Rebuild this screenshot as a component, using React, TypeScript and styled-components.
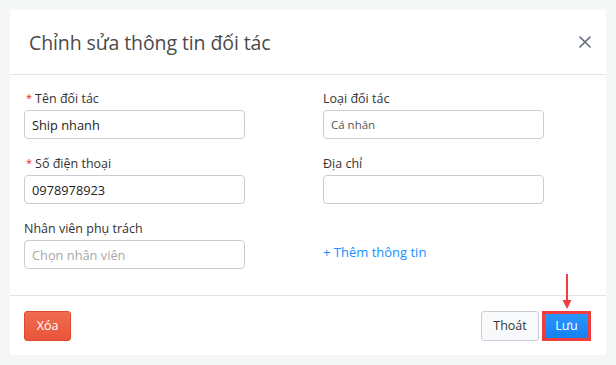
import React from "react";
import styled, { createGlobalStyle } from "styled-components";

const Global = createGlobalStyle`
  html, body { margin: 0; padding: 0; background: #f5f6f6; }
  body { font-family: "Open Sans", "Noto Sans", sans-serif; }
  * { box-sizing: border-box; }
`;

const Page = styled.div`
  width: 616px;
  height: 365px;
  padding: 10px;
  background: #f5f6f6;
`;

const Card = styled.div`
  width: 596px;
  height: 345px;
  background: #fff;
  display: flex;
  flex-direction: column;
`;

const Header = styled.div`
  height: 65px;
  border-bottom: 1px solid #e3e3e3;
  display: flex;
  align-items: center;
  justify-content: space-between;
  padding: 0 15px 0 19px;
`;

const Title = styled.h2`
  margin: 0;
  font-size: 19.5px;
  font-weight: 400;
  color: #4a4a4a;
  letter-spacing: -0.1px;
`;

const CloseBtn = styled.button`
  border: none;
  background: none;
  padding: 0;
  width: 12px;
  height: 12px;
  display: flex;
  cursor: pointer;
`;

const Body = styled.div`
  flex: 1;
  display: grid;
  grid-template-columns: 299px 1fr;
  grid-auto-rows: 65px;
  padding: 15px 14px 0 14px;
  border-bottom: 1px solid #e3e3e3;
`;

const Field = styled.div`
  display: flex;
  flex-direction: column;
  gap: 2px;
`;

const Label = styled.label`
  font-size: 12.5px;
  line-height: 18px;
  color: #333;
  display: flex;
  align-items: center;
`;

const Star = styled.span`
  color: #f5222d;
  font-size: 11px;
  margin: 0 3px 0 2px;
  position: relative;
  top: -1px;
`;

const Input = styled.input<{ $small?: boolean }>`
  width: 221px;
  height: 29px;
  border: 1px solid #c9ced6;
  border-radius: 4px;
  padding: 0 7px;
  font-family: inherit;
  font-size: ${(p) => (p.$small ? "11.5px" : "12.8px")};
  color: ${(p) => (p.$small ? "#555" : "#222")};
  outline: none;
  background: #fff;
  &::placeholder {
    color: #a8a8a8;
  }
`;

const AddLink = styled.a`
  margin-top: 3px;
  font-size: 13px;
  color: #1890ff;
  line-height: 18px;
  cursor: pointer;
`;

const Footer = styled.div`
  height: 59px;
  display: flex;
  align-items: center;
  justify-content: space-between;
  padding: 0 15px 0 14px;
`;

const Actions = styled.div`
  display: flex;
  align-items: center;
  gap: 3px;
`;

const Button = styled.button<{ $variant: "danger" | "default" | "primary" }>`
  height: 30px;
  font-family: inherit;
  font-size: 12.5px;
  border-radius: 3px;
  cursor: pointer;
  padding: 0;
  position: relative;
  ${(p) =>
    p.$variant === "danger"
      ? `
    width: 47px;
    color: #fff;
    border: 1px solid #e0482c;
    background: linear-gradient(#f06c50, #e8553a);
  `
      : p.$variant === "default"
      ? `
    width: 58px;
    color: #333;
    border: 1px solid #c9ced6;
    background: #f8f9fa;
  `
      : `
    width: 49px;
    color: #fff;
    border: 3px solid #f03e3e;
    border-radius: 0;
    background: linear-gradient(#2a96ff, #1681f2);
  `}
`;

const Arrow = styled.svg`
  position: absolute;
  left: 17px;
  top: -40px;
`;

export default function App() {
  return (
    <>
      <Global />
      <Page>
        <Card>
          <Header>
            <Title>Chỉnh sửa thông tin đối tác</Title>
            <CloseBtn aria-label="close">
              <svg width="12" height="12" viewBox="0 0 12 12">
                <path d="M1 1L11 11M11 1L1 11" stroke="#5d6878" strokeWidth="1.6" strokeLinecap="round" />
              </svg>
            </CloseBtn>
          </Header>
          <Body>
            <Field>
              <Label>
                <Star>*</Star>Tên đối tác
              </Label>
              <Input defaultValue="Ship nhanh" />
            </Field>
            <Field>
              <Label>Loại đối tác</Label>
              <Input $small defaultValue="Cá nhân" />
            </Field>
            <Field>
              <Label>
                <Star>*</Star>Số điện thoại
              </Label>
              <Input defaultValue="0978978923" />
            </Field>
            <Field>
              <Label>Địa chỉ</Label>
              <Input />
            </Field>
            <Field>
              <Label>Nhân viên phụ trách</Label>
              <Input placeholder="Chọn nhân viên" />
            </Field>
            <Field>
              <Label>&nbsp;</Label>
              <AddLink>+ Thêm thông tin</AddLink>
            </Field>
          </Body>
          <Footer>
            <Button $variant="danger">Xóa</Button>
            <Actions>
              <Button $variant="default">Thoát</Button>
              <Button $variant="primary">
                Lưu
                <Arrow width="10" height="36" viewBox="0 0 10 36">
                  <line x1="5" y1="0" x2="5" y2="28" stroke="#f03e3e" strokeWidth="2" />
                  <path d="M0.5 26 L9.5 26 L5 35 Z" fill="#f03e3e" />
                </Arrow>
              </Button>
            </Actions>
          </Footer>
        </Card>
      </Page>
    </>
  );
}
